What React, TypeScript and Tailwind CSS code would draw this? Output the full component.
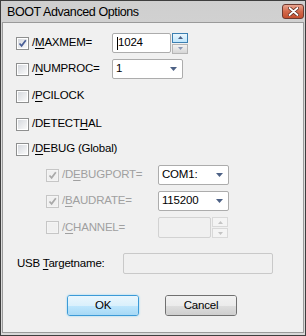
import React from "react";

function Check({ checked, disabled }: { checked?: boolean; disabled?: boolean }) {
  return (
    <div
      className={`w-[13px] h-[13px] shrink-0 border p-[1px] ${
        disabled ? "border-[#c6c6c6] bg-[#f4f4f4]" : "border-[#8e8f8f] bg-white"
      }`}
    >
      <div
        className={`w-full h-full ${
          disabled ? "bg-[#f0f0f0]" : "bg-gradient-to-br from-[#d6d9de] to-[#f9f9f9]"
        }`}
      >
        {checked && (
          <svg width="9" height="9" viewBox="0 0 9 9">
            <path
              d="M1.5 4.5 L3.6 6.8 L7.8 1.2"
              fill="none"
              stroke={disabled ? "#a9a9a9" : "#4a5f97"}
              strokeWidth="1.7"
            />
          </svg>
        )}
      </div>
    </div>
  );
}

function Label({ pre, u, post, disabled }: { pre: string; u: string; post: string; disabled?: boolean }) {
  return (
    <span className={`whitespace-nowrap ${disabled ? "text-[#a0a0a0]" : "text-black"}`}>
      {pre}
      <span className="underline underline-offset-[2px]">{u}</span>
      {post}
    </span>
  );
}

function Arrow({ color = "#4d6185" }: { color?: string }) {
  return (
    <svg width="7" height="4" viewBox="0 0 7 4">
      <path d="M0 0 H7 L3.5 4 Z" fill={color} />
    </svg>
  );
}

function Combo({ value, w }: { value: string; w: string }) {
  return (
    <div className={`${w} h-[20px] border border-[#acacac] rounded-[2px] bg-white flex items-center pl-[3px] pr-[5px]`}>
      <span className="flex-1 text-black">{value}</span>
      <Arrow />
    </div>
  );
}

function Spin({ disabled }: { disabled?: boolean }) {
  const tri = disabled ? "#c4c4c4" : "#4d6185";
  return (
    <div className="flex flex-col gap-[1px] ml-[1px]">
      <div
        className={`w-[16px] h-[10px] border flex items-center justify-center ${
          disabled
            ? "border-[#d9d9d9] bg-[#f4f4f4]"
            : "border-[#3c7fb1] bg-gradient-to-b from-[#eaf6fd] to-[#bee6fd]"
        }`}
      >
        <svg width="5" height="3" viewBox="0 0 5 3">
          <path d="M0 3 H5 L2.5 0 Z" fill={tri} />
        </svg>
      </div>
      <div
        className={`w-[16px] h-[10px] border flex items-center justify-center ${
          disabled
            ? "border-[#d9d9d9] bg-[#f4f4f4]"
            : "border-[#b5b5b5] bg-gradient-to-b from-[#f2f2f2] to-[#d6d6d6]"
        }`}
      >
        <svg width="5" height="3" viewBox="0 0 5 3">
          <path d="M0 0 H5 L2.5 3 Z" fill={disabled ? tri : "#8a97b3"} />
        </svg>
      </div>
    </div>
  );
}

export default function App() {
  return (
    <div className="w-[306px] h-[336px] bg-white font-['Liberation_Sans',Arial,sans-serif] text-[11.5px] tracking-[-0.2px] leading-none">
      <div className="w-full h-full border border-[#3e3e3e] bg-gradient-to-b from-[#cfcfcf] via-[#dedede] to-[#d8d8d8] flex flex-col">
        {/* title bar */}
        <div className="h-[21px] flex items-start shrink-0">
          <span className="mt-[5px] ml-[6px] text-[12.5px] tracking-[-0.4px] text-black flex-1">BOOT Advanced Options</span>
          <div className="mt-[3px] mr-[1px] w-[22px] h-[15px] rounded-[3px] border border-[#6e3a30] bg-gradient-to-b from-[#e9a591] via-[#d3694b] to-[#c44f2f] flex items-center justify-center">
            <svg width="11" height="9" viewBox="0 0 11 9">
              <path d="M1.5 1 L9.5 8 M9.5 1 L1.5 8" stroke="#5a2a20" strokeWidth="3.4" strokeLinecap="round" />
              <path d="M1.5 1 L9.5 8 M9.5 1 L1.5 8" stroke="#ffffff" strokeWidth="1.8" strokeLinecap="round" />
            </svg>
          </div>
        </div>

        {/* client */}
        <div className="flex-1 mx-[1px] mb-[2px] border border-[#9a9a9a] bg-[#f0f0f0] flex flex-col pl-[13px]">
          <div className="mt-[10px] h-[20px] flex items-center">
            <Check checked />
            <div className="ml-[3px] w-[80px]">
              <Label pre="/" u="M" post="AXMEM=" />
            </div>
            <div className="w-[59px] h-[20px] border border-[#acacac] rounded-[2px] bg-white flex items-center pl-[4px]">
              <span className="w-[1px] h-[13px] bg-black" />
              <span className="text-black">1024</span>
            </div>
            <Spin />
          </div>

          <div className="mt-[6px] h-[20px] flex items-center">
            <Check />
            <div className="ml-[3px] w-[80px]">
              <Label pre="/" u="N" post="UMPROC=" />
            </div>
            <Combo value="1" w="w-[71px]" />
          </div>

          <div className="mt-[7px] h-[20px] flex items-center">
            <Check />
            <div className="ml-[3px]">
              <Label pre="/" u="P" post="CILOCK" />
            </div>
          </div>

          <div className="mt-[8px] h-[20px] flex items-center">
            <Check />
            <div className="ml-[3px]">
              <Label pre="/DETECT" u="H" post="AL" />
            </div>
          </div>

          <div className="mt-[5px] h-[20px] flex items-center">
            <Check />
            <div className="ml-[3px]">
              <Label pre="/" u="D" post="EBUG (Global)" />
            </div>
          </div>

          <div className="mt-[6px] h-[20px] flex items-center pl-[30px]">
            <Check checked disabled />
            <div className="ml-[3px] w-[96px]">
              <Label pre="/D" u="E" post="BUGPORT=" disabled />
            </div>
            <Combo value="COM1:" w="w-[71px]" />
          </div>

          <div className="mt-[6px] h-[20px] flex items-center pl-[30px]">
            <Check checked disabled />
            <div className="ml-[3px] w-[96px]">
              <Label pre="/" u="B" post="AUDRATE=" disabled />
            </div>
            <Combo value="115200" w="w-[71px]" />
          </div>

          <div className="mt-[6px] h-[21px] flex items-center pl-[30px]">
            <Check disabled />
            <div className="ml-[3px] w-[96px]">
              <Label pre="/" u="C" post="HANNEL=" disabled />
            </div>
            <div className="w-[53px] h-[21px] border border-[#d2d2d2] rounded-[2px] bg-[#f0f0f0]" />
            <Spin disabled />
          </div>

          <div className="mt-[15px] h-[21px] flex items-center">
            <div className="w-[106px] ml-[1px]">
              <Label pre="USB " u="T" post="argetname:" />
            </div>
            <div className="w-[150px] h-[21px] border border-[#c9c9c9] rounded-[2px] bg-[#f0f0f0]" />
          </div>

          <div className="mt-[21px] flex gap-[26px] pl-[51px]">
            <div className="w-[72px] h-[21px] rounded-[3px] border border-[#3c9ad7] shadow-[0_0_2px_#7fd0f5] overflow-hidden flex flex-col relative">
              <div className="flex-1 bg-gradient-to-b from-[#eaf6fd] to-[#d9f0fc]" />
              <div className="flex-1 bg-gradient-to-b from-[#bee6fd] to-[#a7d9f5]" />
              <span className="absolute inset-0 flex items-center justify-center text-black">OK</span>
            </div>
            <div className="w-[72px] h-[21px] rounded-[3px] border border-[#707070] overflow-hidden flex flex-col relative">
              <div className="flex-1 bg-gradient-to-b from-[#f2f2f2] to-[#ebebeb]" />
              <div className="flex-1 bg-gradient-to-b from-[#dddddd] to-[#cfcfcf]" />
              <span className="absolute inset-0 flex items-center justify-center text-black">Cancel</span>
            </div>
          </div>
        </div>
      </div>
    </div>
  );
}
